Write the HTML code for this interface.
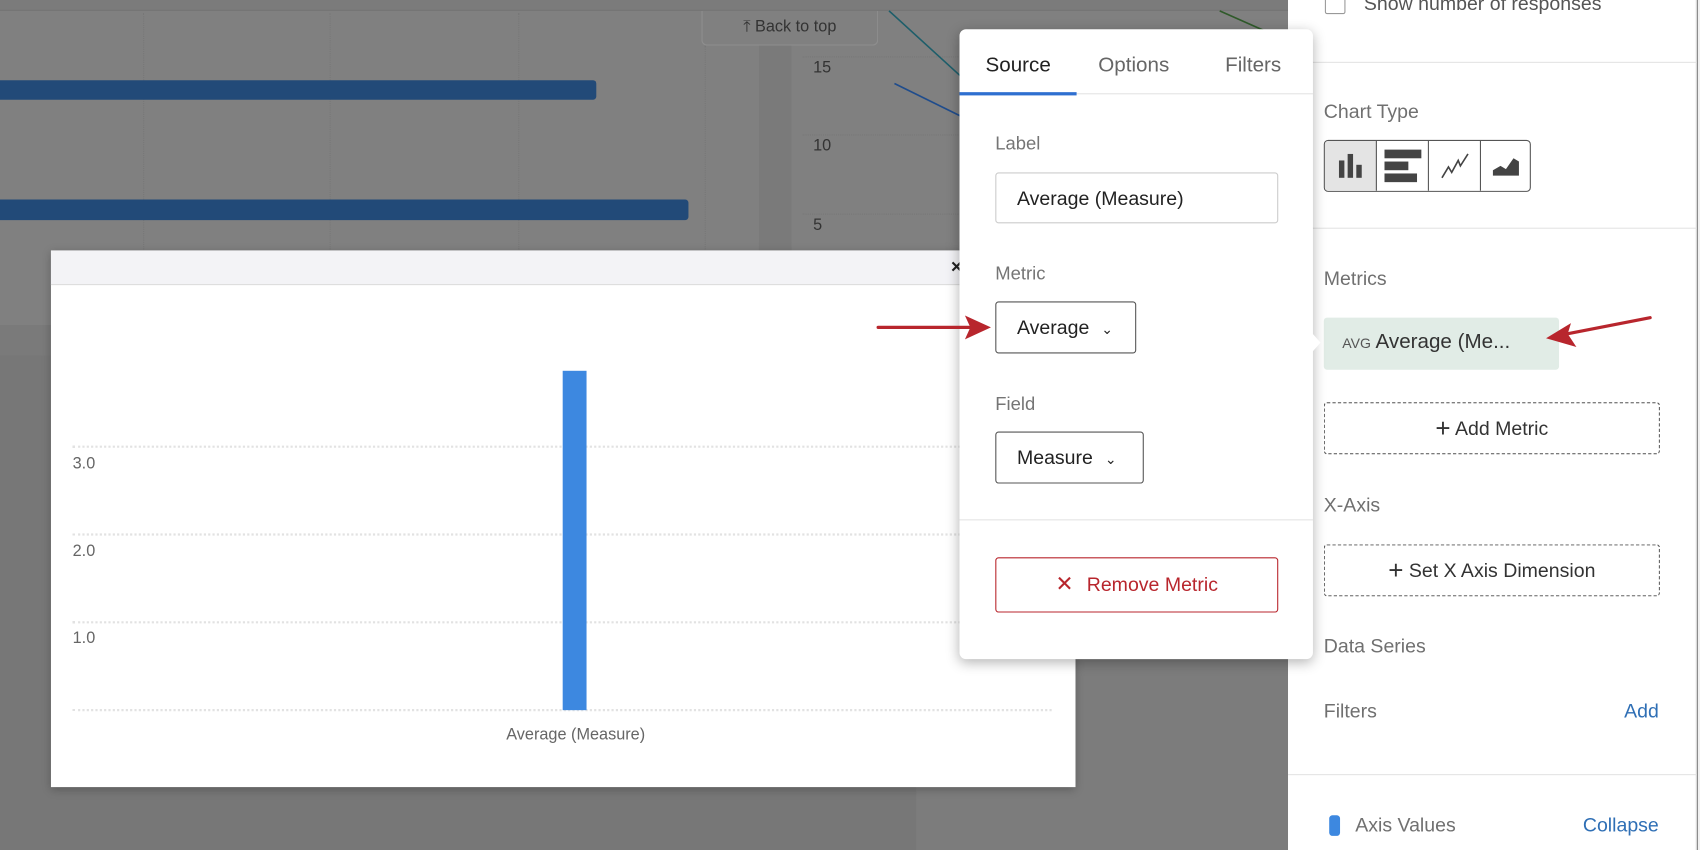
<!DOCTYPE html>
<html><head><meta charset="utf-8"><style>
*{box-sizing:border-box;margin:0;padding:0}
html,body{width:1700px;height:850px;overflow:hidden;background:#787878;font-family:"Liberation Sans",Arial,sans-serif}
#s{position:absolute;left:0;top:0;width:1568px;height:784px;transform:scale(1.08418);transform-origin:0 0;background:#777}
.a{position:absolute}
.lbl{position:absolute;font-size:17px;color:#757575}
.pl{position:absolute;font-size:18px;color:#707070}
</style></head><body><div id="s">
<div class="a" style="left:0;top:0;width:1188px;height:300px;background:#808080"></div>
<div class="a" style="left:0;top:0;width:1188px;height:10px;background:#7b7b7b;border-bottom:1px solid #747474"></div>
<div class="a" style="left:845px;top:300px;width:343px;height:484px;background:#7c7c7c"></div>
<div class="a" style="left:0;top:300px;width:845px;height:28px;background:#7a7a7a"></div>
<div class="a" style="left:700px;top:42px;width:30px;height:258px;background:#7a7a7a"></div>
<div class="a" style="left:132px;top:12px;height:230px;border-left:1px dotted #777"></div>
<div class="a" style="left:304px;top:12px;height:230px;border-left:1px dotted #777"></div>
<div class="a" style="left:478px;top:12px;height:230px;border-left:1px dotted #777"></div>
<div class="a" style="left:650px;top:42px;height:200px;border-left:1px dotted #777"></div>
<div class="a" style="left:0;top:74px;width:550px;height:18px;background:#224a78;border-radius:0 3px 3px 0"></div>
<div class="a" style="left:0;top:184px;width:635px;height:19px;background:#224a78;border-radius:0 3px 3px 0"></div>
<div class="a" style="left:647px;top:10px;width:163px;height:32px;border:1px solid #8e8e8e;border-top:none;border-radius:0 0 5px 5px;background:#808080;color:#333;font-size:15px;text-align:center;line-height:30px">⤒ Back to top</div>
<div class="a" style="left:740px;top:52px;width:150px;border-top:1px dotted #777"></div>
<div class="a" style="left:740px;top:124px;width:150px;border-top:1px dotted #777"></div>
<div class="a" style="left:740px;top:197px;width:150px;border-top:1px dotted #777"></div>
<div class="a" style="left:750px;top:54px;font-size:15px;color:#333">15</div>
<div class="a" style="left:750px;top:126px;font-size:15px;color:#333">10</div>
<div class="a" style="left:750px;top:199px;font-size:15px;color:#333">5</div>
<svg class="a" style="left:0;top:0" width="1188" height="300"><line x1="820" y1="10" x2="888" y2="72" stroke="#1d5e6a" stroke-width="1.5"/><line x1="825" y1="77" x2="888" y2="108" stroke="#1f4c8c" stroke-width="1.5"/><line x1="1125" y1="10" x2="1170" y2="30" stroke="#2f5a2a" stroke-width="1.5"/></svg>

<div class="a" style="left:47px;top:231px;width:945px;height:495px;background:#fff;box-shadow:0 2px 8px rgba(0,0,0,.25)">
 <div class="a" style="left:0;top:0;width:945px;height:32px;background:#f3f3f6;border-bottom:1px solid #ddd"></div>
 <div class="a" style="left:830px;top:5px;font-size:18px;color:#222;font-weight:bold">×</div>
 <div class="a" style="left:20px;top:180px;width:903px;border-top:2px dotted #e2e2e2"></div>
 <div class="a" style="left:20px;top:261px;width:903px;border-top:2px dotted #e2e2e2"></div>
 <div class="a" style="left:20px;top:342px;width:903px;border-top:2px dotted #e2e2e2"></div>
 <div class="a" style="left:20px;top:423px;width:903px;border-top:2px dotted #e2e2e2"></div>
 <div class="a" style="left:20px;top:188px;font-size:15px;color:#666">3.0</div>
 <div class="a" style="left:20px;top:269px;font-size:15px;color:#666">2.0</div>
 <div class="a" style="left:20px;top:349px;font-size:15px;color:#666">1.0</div>
 <div class="a" style="left:472px;top:111px;width:22px;height:313px;background:#3d88e0"></div>
 <div class="a" style="left:384px;top:438px;width:200px;text-align:center;font-size:15px;color:#666">Average (Measure)</div>
</div>

<!-- right panel -->
<div class="a" style="left:1188px;top:0;width:377px;height:784px;background:#fff;border-right:1px solid #e6e6e6">
 <div class="a" style="left:34px;top:-6px;width:19px;height:19px;border:1px solid #999;border-radius:2px"></div>
 <div class="pl" style="left:70px;top:-7px;color:#555">Show number of responses</div>
 <div class="a" style="left:0;top:57px;width:377px;border-top:1px solid #e3e3e3"></div>
 <div class="pl" style="left:33px;top:93px">Chart Type</div>
 <div class="a" style="left:33px;top:129px;width:191px;height:48px;border:1px solid #555;border-radius:4px;overflow:hidden;display:flex">
  <div style="width:48px;background:#e4e4e4;border-right:1px solid #555;display:flex;align-items:center;justify-content:center"><svg width="26" height="26"><rect x="2" y="8" width="5" height="16" fill="#444"/><rect x="10" y="2" width="5" height="22" fill="#444"/><rect x="18" y="12" width="5" height="12" fill="#444"/></svg></div>
  <div style="width:48px;border-right:1px solid #555;display:flex;align-items:center;justify-content:center"><svg width="38" height="34"><rect x="2" y="2" width="34" height="8" fill="#444"/><rect x="2" y="13" width="22" height="8" fill="#444"/><rect x="2" y="24" width="30" height="8" fill="#444"/></svg></div>
  <div style="width:48px;border-right:1px solid #555;display:flex;align-items:center;justify-content:center"><svg width="28" height="26"><polyline points="2,24 8,14 11,19 17,8 19,13 26,2" fill="none" stroke="#444" stroke-width="1.5"/></svg></div>
  <div style="flex:1;display:flex;align-items:center;justify-content:center"><svg width="26" height="20"><polygon points="1,19 1,14 8,10 13,13 20,3 25,6 25,19" fill="#444"/></svg></div>
 </div>
 <div class="a" style="left:0;top:210px;width:377px;border-top:1px solid #e3e3e3"></div>
 <div class="pl" style="left:33px;top:247px">Metrics</div>
 <div class="a" style="left:33px;top:293px;width:217px;height:48px;background:#e1ece6;border-radius:3px;padding:12px 0 0 17px;font-size:19px;color:#333;white-space:nowrap"><span style="font-size:13px;color:#555">AVG</span> Average (Me...</div>
 <div class="a" style="left:33px;top:371px;width:310px;height:48px;border:1px dashed #555;border-radius:3px;text-align:center;line-height:46px;font-size:18px;color:#333"><span style="font-size:24px;vertical-align:-2px">+</span> Add Metric</div>
 <div class="pl" style="left:33px;top:456px">X-Axis</div>
 <div class="a" style="left:33px;top:502px;width:310px;height:48px;border:1px dashed #555;border-radius:3px;text-align:center;line-height:46px;font-size:18px;color:#333"><span style="font-size:24px;vertical-align:-2px">+</span> Set X Axis Dimension</div>
 <div class="pl" style="left:33px;top:586px">Data Series</div>
 <div class="pl" style="left:33px;top:646px">Filters</div>
 <div class="a" style="right:34px;top:646px;font-size:18px;color:#2f6fb5">Add</div>
 <div class="a" style="left:0;top:714px;width:377px;border-top:1px solid #e3e3e3"></div>
 <div class="a" style="left:38px;top:752px;width:10px;height:19px;background:#3d88e0;border-radius:3px"></div>
 <div class="pl" style="left:62px;top:751px">Axis Values</div>
 <div class="a" style="right:34px;top:751px;font-size:18px;color:#2f6fb5">Collapse</div>
</div>
<div class="a" style="left:1566px;top:0;width:2px;height:784px;background:#f0f0f0"></div>

<!-- popup -->
<div class="a" style="left:885px;top:27px;width:326px;height:581px;background:#fff;border-radius:6px;box-shadow:0 3px 12px rgba(0,0,0,.3)">
 <div class="a" style="left:0;top:59px;width:326px;border-top:1px solid #e3e3e3"></div>
 <div class="a" style="left:0;top:58px;width:108px;height:3px;background:#2f6fd0"></div>
 <div class="a" style="left:24px;top:23px;font-size:19px;color:#222">Source</div>
 <div class="a" style="left:128px;top:23px;font-size:19px;color:#666">Options</div>
 <div class="a" style="left:245px;top:23px;font-size:19px;color:#666">Filters</div>
 <div class="lbl" style="left:33px;top:96px">Label</div>
 <div class="a" style="left:33px;top:132px;width:261px;height:47px;border:1px solid #ccc;border-radius:3px;font-size:18px;color:#222;padding:13px 0 0 19px">Average (Measure)</div>
 <div class="lbl" style="left:33px;top:216px">Metric</div>
 <div class="a" style="left:33px;top:251px;width:130px;height:48px;border:1px solid #555;border-radius:3px;font-size:18px;color:#222;padding:13px 0 0 19px">Average <span style="font-size:13px;margin-left:6px">⌄</span></div>
 <div class="lbl" style="left:33px;top:336px">Field</div>
 <div class="a" style="left:33px;top:371px;width:137px;height:48px;border:1px solid #555;border-radius:3px;font-size:18px;color:#222;padding:13px 0 0 19px">Measure <span style="font-size:13px;margin-left:6px">⌄</span></div>
 <div class="a" style="left:0;top:452px;width:326px;border-top:1px solid #e3e3e3"></div>
 <div class="a" style="left:33px;top:487px;width:261px;height:51px;border:1px solid #b8262d;border-radius:3px;font-size:18px;color:#b8262d;text-align:center;line-height:49px"><span style="font-size:20px;margin-right:12px">✕</span>Remove Metric</div>
</div>
<div class="a" style="left:1210px;top:307px;width:0;height:0;border-top:9px solid transparent;border-bottom:9px solid transparent;border-left:8px solid #fff"></div>

<!-- red arrows -->
<svg class="a" style="left:0;top:0" width="1568" height="784">
 <line x1="810" y1="302" x2="895" y2="302" stroke="#b8262d" stroke-width="3" stroke-linecap="round"/>
 <polygon points="914,302 890,291 895,302 890,313" fill="#b8262d"/>
 <line x1="1522" y1="293" x2="1445" y2="308" stroke="#b8262d" stroke-width="3" stroke-linecap="round"/>
 <polygon points="1426,312 1449,298 1446,308 1454,320" fill="#b8262d"/>
</svg>
</div></body></html>
